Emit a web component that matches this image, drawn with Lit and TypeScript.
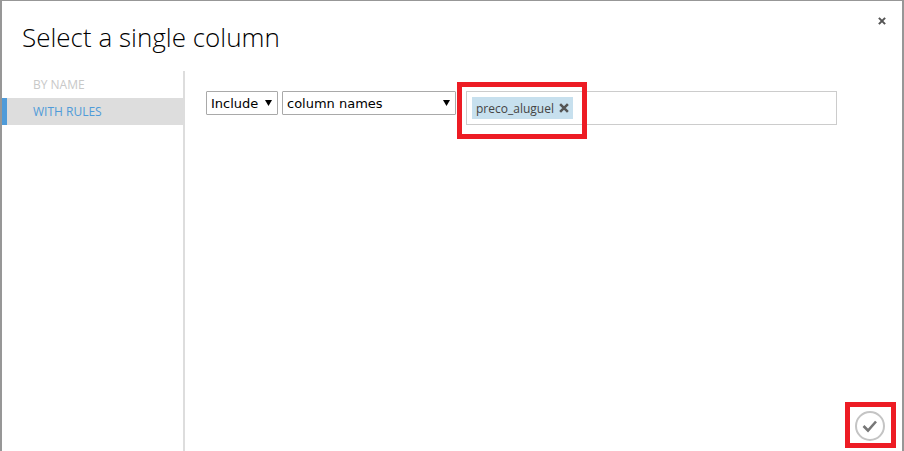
import { LitElement, html, css } from "lit";
import { customElement, state } from "lit/decorators.js";

@customElement("app-root")
export class AppRoot extends LitElement {
  static styles = css`
    :host {
      display: block;
      font-family: "Open Sans", "Noto Sans", sans-serif;
      font-size: 12px;
      color: #444;
    }
    * {
      box-sizing: border-box;
    }
    button {
      font: inherit;
      color: inherit;
      background: none;
      border: 0;
      padding: 0;
      cursor: pointer;
    }
    svg {
      display: block;
    }
    .dialog {
      display: flex;
      flex-direction: column;
      min-height: 100vh;
      background: #fff;
      border: solid #979797;
      border-width: 1px 2px 0;
    }
    .head {
      display: flex;
      justify-content: space-between;
      align-items: flex-start;
      height: 70px;
      padding: 16px 16px 0 20px;
    }
    h1 {
      margin: 0;
      font-family: "Open Sans Light", "Open Sans", sans-serif;
      font-size: 26px;
      line-height: 40px;
      font-weight: 300;
      color: #000;
    }
    .body {
      display: flex;
      flex: 1;
    }
    .nav {
      display: flex;
      flex-direction: column;
      width: 183px;
      border-right: 2px solid #ddd;
    }
    .tab {
      height: 27px;
      padding-left: 26px;
      border-left: 5px solid transparent;
      text-align: left;
      color: #c8c8c8;
      font-weight: 500;
    }
    .tab.on {
      background: #ddd;
      border-color: #4f9bd9;
      color: #4f9bd9;
    }
    .main {
      display: flex;
      flex-direction: column;
      justify-content: space-between;
      flex: 1;
      min-width: 0;
    }
    .rule {
      display: flex;
      align-items: flex-start;
      gap: 4px;
      padding: 20px 65px 0 21px;
    }
    .pick {
      position: relative;
      flex: none;
    }
    .pick svg {
      position: absolute;
      right: 6px;
      top: 9px;
      pointer-events: none;
    }
    select {
      display: block;
      appearance: none;
      width: 100%;
      height: 24px;
      padding: 0 4px;
      border: 1px solid #a9a9a9;
      border-radius: 1px;
      background: #fff;
      color: #000;
      font: 13px "DejaVu Sans", sans-serif;
    }
    .mode {
      width: 72px;
    }
    .kind {
      width: 174px;
    }
    .field {
      position: relative;
      display: flex;
      align-items: center;
      flex: 1;
      min-width: 0;
      height: 34px;
      margin-left: 6px;
      padding: 0 5px;
      border: 1px solid #ccc;
    }
    .chip {
      display: flex;
      align-items: center;
      gap: 5px;
      height: 22px;
      padding: 0 4px;
      background: #c7e0ee;
    }
    .entry {
      flex: 1;
      min-width: 0;
      border: 0;
      outline: 0;
      font: inherit;
      background: none;
    }
    .mark {
      position: absolute;
      border: 5px solid #ed1c24;
      pointer-events: none;
    }
    .mark-field {
      left: -10px;
      top: -10px;
      width: 130px;
      height: 57px;
    }
    .mark-done {
      inset: -9px -11px -7px -10px;
    }
    .foot {
      display: flex;
      justify-content: flex-end;
      padding: 0 17px 10px;
    }
    .done {
      position: relative;
    }
  `;

  @state() private tab = "WITH RULES";

  render() {
    const arrow = html`<svg width="7" height="6" viewBox="0 0 7 6"><path d="M0 0h7L3.5 6z" /></svg>`;
    const cross = (size: number) => html`<svg width=${size} height=${size} viewBox="0 0 9 9">
      <path d="M1 1l7 7M8 1l-7 7" stroke="#555" stroke-width="2.3" />
    </svg>`;
    return html`
      <section class="dialog" role="dialog" aria-labelledby="title">
        <header class="head">
          <h1 id="title">Select a single column</h1>
          <button aria-label="Close">${cross(8)}</button>
        </header>
        <div class="body">
          <nav class="nav">
            ${["BY NAME", "WITH RULES"].map(
              (name) => html`<button
                class="tab ${name === this.tab ? "on" : ""}"
                @click=${() => (this.tab = name)}
              >${name}</button>`
            )}
          </nav>
          <main class="main">
            <div class="rule">
              <div class="pick mode">
                <select aria-label="Rule"><option>Include</option><option>Exclude</option></select>
                ${arrow}
              </div>
              <div class="pick kind">
                <select aria-label="Match by"><option>column names</option><option>column indices</option></select>
                ${arrow}
              </div>
              <div class="field">
                <span class="chip">preco_aluguel<button aria-label="Remove preco_aluguel">${cross(10)}</button></span>
                <input class="entry" aria-label="Column names" />
                <span class="mark mark-field"></span>
              </div>
            </div>
            <footer class="foot">
              <button class="done" aria-label="Done">
                <svg width="30" height="30" viewBox="0 0 30 30" fill="none">
                  <circle cx="15" cy="15" r="14" stroke="#c4c4c4" stroke-width="2" />
                  <path d="M8.5 15l4.5 4.5 8-9" stroke="#777" stroke-width="2.6" />
                </svg>
                <span class="mark mark-done"></span>
              </button>
            </footer>
          </main>
        </div>
      </section>
    `;
  }
}
